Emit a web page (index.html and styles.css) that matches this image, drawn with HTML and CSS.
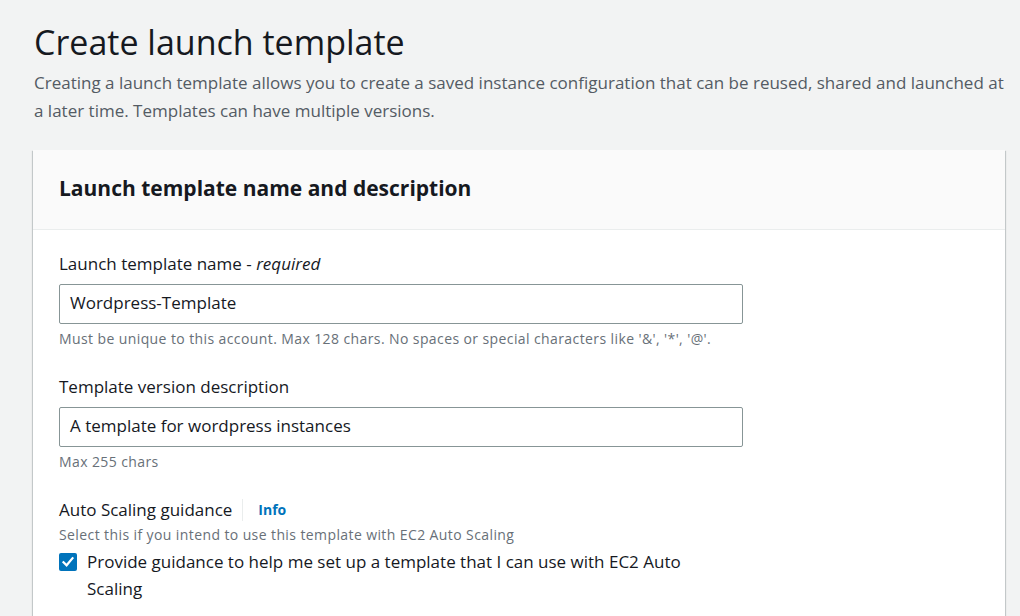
FILE: index.html
```html
<!DOCTYPE html>
<html lang="en">
<head>
<meta charset="utf-8">
<title>Create launch template</title>
<link rel="stylesheet" href="styles.css">
</head>
<body>
<main class="page">
  <header class="page-header">
    <h1 class="page-title">Create launch template</h1>
    <p class="page-desc">Creating a launch template allows you to create a saved instance configuration that can be reused, shared and launched at a later time. Templates can have multiple versions.</p>
  </header>
  <section class="card">
    <div class="card-header">
      <h2 class="card-title">Launch template name and description</h2>
    </div>
    <div class="card-body">
      <div class="field">
        <label class="field-label">Launch template name - <i>required</i></label>
        <div class="input">Wordpress-Template</div>
        <div class="field-help">Must be unique to this account. Max 128 chars. No spaces or special characters like '&amp;', '*', '@'.</div>
      </div>
      <div class="field">
        <label class="field-label">Template version description</label>
        <div class="input">A template for wordpress instances</div>
        <div class="field-help">Max 255 chars</div>
      </div>
      <div class="field">
        <div class="label-row">
          <span class="field-label">Auto Scaling guidance</span>
          <span class="info-link">Info</span>
        </div>
        <div class="field-desc">Select this if you intend to use this template with EC2 Auto Scaling</div>
        <div class="check-row">
          <span class="checkbox">
            <svg viewBox="0 0 18 18" width="18" height="18"><path d="M4.5 9.2 L7.6 12.3 L13.5 5.2" fill="none" stroke="#fff" stroke-width="2.2" stroke-linecap="square"/></svg>
          </span>
          <span class="check-label">Provide guidance to help me set up a template that I can use with EC2 Auto Scaling</span>
        </div>
      </div>
    </div>
  </section>
</main>
</body>
</html>
```

FILE: styles.css
```css
* { box-sizing: border-box; }
html, body { margin: 0; padding: 0; }
html { height: 616px; overflow: hidden; }
body {
  height: 616px;
  background: #f2f3f3;
  font-family: "Open Sans", "Noto Sans", sans-serif;
  color: #16191f;
  overflow: hidden;
}
.page {
  height: 616px;
  overflow: hidden;
  padding: 20px 15px 0 33px;
}
.page-header {
  padding-left: 1px;
}
.page-title {
  margin: 0;
  font-size: 34px;
  font-weight: 400;
  line-height: 44px;
  color: #16191f;
}
.page-desc {
  margin: 5px 0 0;
  font-size: 17px;
  line-height: 28px;
  color: #545b64;
}
.card {
  margin-top: 25px;
  background: #fff;
  box-shadow: 0 1px 1px rgba(0,28,36,0.3), 1px 1px 1px rgba(0,28,36,0.15), -1px 1px 1px rgba(0,28,36,0.15);
}
.card-header {
  background: #fafafa;
  border-bottom: 1px solid #eaeded;
  height: 80px;
  padding: 0 26px 3px;
  display: flex;
  align-items: center;
}
.card-title {
  margin: 0;
  font-size: 21px;
  font-weight: 700;
  line-height: 28px;
}
.card-body {
  padding: 21px 26px 20px;
}
.field {
  margin-bottom: 24px;
  width: 684px;
}
.field-label {
  display: block;
  font-size: 17px;
  line-height: 26px;
  color: #16191f;
}
.input {
  margin-top: 7px;
  height: 40px;
  border: 1px solid #879596;
  border-radius: 2px;
  padding: 0 10px 3px;
  display: flex;
  align-items: center;
  font-size: 17px;
  color: #16191f;
}
.field-help {
  margin-top: 4px;
  font-size: 14px;
  line-height: 22px;
  letter-spacing: 0.4px;
  color: #687078;
}
.label-row {
  display: flex;
  align-items: center;
}
.info-link {
  margin-left: 10px;
  padding-left: 15px;
  border-left: 1px solid #eaeded;
  font-size: 14px;
  font-weight: 700;
  line-height: 22px;
  color: #0073bb;
}
.field-desc {
  margin-top: 1px;
  font-size: 14px;
  line-height: 22px;
  letter-spacing: 0.4px;
  color: #687078;
}
.check-row {
  display: flex;
  align-items: flex-start;
  margin-top: 2px;
}
.checkbox {
  flex: none;
  width: 18px;
  height: 18px;
  margin-top: 5px;
  background: #0073bb;
  border-radius: 2px;
  display: flex;
}
.check-label {
  margin-left: 10px;
  font-size: 17px;
  line-height: 27px;
  width: 610px;
}
```
